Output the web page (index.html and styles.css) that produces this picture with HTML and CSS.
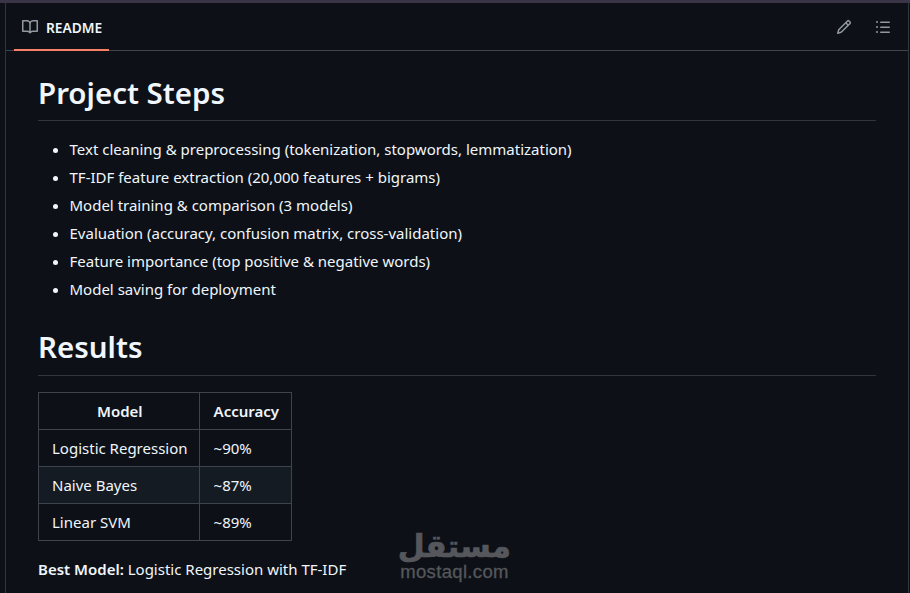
FILE: index.html
```html
<!DOCTYPE html>
<html lang="en">
<head>
<meta charset="utf-8">
<title>README</title>
<link rel="stylesheet" href="styles.css">
</head>
<body>
<div class="topline"></div>
<section class="box">
  <header class="bar">
    <div class="tab">
      <svg class="icon" viewBox="0 0 16 16" width="16" height="16"><path fill="currentColor" d="M0 1.75A.75.75 0 0 1 .75 1h4.253c1.227 0 2.317.59 3 1.501A3.743 3.743 0 0 1 11.006 1h4.245a.75.75 0 0 1 .75.75v10.5a.75.75 0 0 1-.75.75h-4.507a2.25 2.25 0 0 0-1.591.659l-.622.621a.75.75 0 0 1-1.06 0l-.622-.621A2.25 2.25 0 0 0 5.258 13H.75a.75.75 0 0 1-.75-.75Zm7.251 10.324.004-5.073-.002-2.253A2.25 2.25 0 0 0 5.003 2.5H1.5v9h3.757a3.75 3.75 0 0 1 1.994.574ZM8.755 4.75l-.004 7.322a3.752 3.752 0 0 1 1.992-.572H14.5v-9h-3.495a2.25 2.25 0 0 0-2.25 2.25Z"/></svg>
      <span class="tab-label">README</span>
    </div>
    <div class="tools">
      <svg class="icon" viewBox="0 0 16 16" width="16" height="16"><path fill="currentColor" d="M11.013 1.427a1.75 1.75 0 0 1 2.474 0l1.086 1.086a1.75 1.75 0 0 1 0 2.474l-8.61 8.61c-.21.21-.47.364-.756.445l-3.251.93a.75.75 0 0 1-.927-.928l.929-3.25c.081-.286.235-.547.445-.758l8.61-8.61Zm.176 4.823L9.75 4.81l-6.286 6.287a.253.253 0 0 0-.064.108l-.558 1.953 1.953-.558a.253.253 0 0 0 .108-.064Zm1.238-3.763a.25.25 0 0 0-.354 0L10.811 3.75l1.439 1.44 1.263-1.263a.25.25 0 0 0 0-.354Z"/></svg>
      <svg class="icon" viewBox="0 0 16 16" width="16" height="16"><path fill="currentColor" d="M5.75 2.5h8.5a.75.75 0 0 1 0 1.5h-8.5a.75.75 0 0 1 0-1.5Zm0 5h8.5a.75.75 0 0 1 0 1.5h-8.5a.75.75 0 0 1 0-1.5Zm0 5h8.5a.75.75 0 0 1 0 1.5h-8.5a.75.75 0 0 1 0-1.5ZM2 14a1 1 0 1 1 0-2 1 1 0 0 1 0 2Zm1-6a1 1 0 1 1-2 0 1 1 0 0 1 2 0ZM2 4a1 1 0 1 1 0-2 1 1 0 0 1 0 2Z"/></svg>
    </div>
  </header>
  <article class="body">
    <h2 class="title">Project Steps</h2>
    <ul class="steps">
      <li>Text cleaning &amp; preprocessing (tokenization, stopwords, lemmatization)</li>
      <li>TF-IDF feature extraction (20,000 features + bigrams)</li>
      <li>Model training &amp; comparison (3 models)</li>
      <li>Evaluation (accuracy, confusion matrix, cross-validation)</li>
      <li>Feature importance (top positive &amp; negative words)</li>
      <li>Model saving for deployment</li>
    </ul>
    <h2 class="title title-next">Results</h2>
    <table class="results">
      <thead><tr><th>Model</th><th>Accuracy</th></tr></thead>
      <tbody>
        <tr><td>Logistic Regression</td><td>~90%</td></tr>
        <tr class="alt"><td>Naive Bayes</td><td>~87%</td></tr>
        <tr><td>Linear SVM</td><td>~89%</td></tr>
      </tbody>
    </table>
    <p class="best"><strong>Best Model:</strong> Logistic Regression with TF-IDF</p>
  </article>
</section>
<div class="mark"><div class="mark-ar" lang="ar" dir="rtl">مستقل</div><div class="mark-en">mostaql.com</div></div>
</body>
</html>
```
FILE: styles.css
```css
* { box-sizing: border-box; }
html, body { margin: 0; height: 100%; overflow: hidden; }
body {
  background: #0d1117;
  color: #f0f6fc;
  font-family: "Noto Sans", "Open Sans", sans-serif;
  font-size: 15px;
  position: relative;
}
.topline { height: 3px; background: #3b3548; }
.box {
  margin: 0 1px 0 5px;
  border-left: 1px solid #30363d;
  border-right: 1px solid #30363d;
  height: 590px;
  overflow: hidden;
}
.bar {
  height: 48px;
  border-bottom: 1px solid #3d444d;
  display: flex;
  justify-content: space-between;
  align-items: center;
  padding: 0 17px 0 8px;
}
.tab {
  height: 48px;
  width: 95px;
  padding-left: 8px;
  display: flex;
  align-items: center;
  gap: 8px;
  font-size: 13.75px;
  font-weight: 600;
  color: #f0f6fc;
  border-bottom: 2px solid #f78166;
  margin-bottom: -1px;
  padding-top: 1px;
}
.tab-label { position: relative; top: 1px; }
.icon { color: #9198a1; display: block; flex: none; }
.tools { display: flex; gap: 23px; }
.body { padding: 0 32px; }
.title {
  margin: 0;
  font-size: 29.5px;
  font-weight: 600;
  line-height: 40px;
  padding-top: 22px;
  padding-bottom: 7px;
  border-bottom: 1px solid #30363d;
}
.title-next { padding-top: 26px; padding-bottom: 8px; }
.steps { margin: 16px 0 0; padding: 0 0 0 31.5px; line-height: 24px; }
.steps li { margin-top: 4px; }
.steps li:first-child { margin-top: 0; }
.results {
  border-collapse: collapse;
  margin-top: 16px;
  line-height: 24px;
}
.results th, .results td {
  border: 1px solid #3d444d;
  padding: 6px 12px 6px 14px;
  font-weight: 400;
}
.results th:first-child, .results td:first-child { padding: 6px 11px 6px 13px; }
.results th { font-weight: 600; text-align: center; }
.results .alt td { background: #151b23; }
.best { margin: 16px 0 0; line-height: 24px; }
.best strong { font-weight: 600; }
.mark {
  position: absolute;
  left: 398px;
  top: 529px;
  width: 113px;
  color: #55575c;
  text-align: center;
  pointer-events: none;
}
.mark-ar { font-family: "DejaVu Sans", sans-serif; font-weight: 700; font-size: 31px; line-height: 34px; -webkit-text-stroke: .7px #55575c; }
.mark-en { font-family: "Liberation Sans", sans-serif; font-weight: 400; font-size: 18.5px; line-height: 17px; letter-spacing: .35px; -webkit-text-stroke: .3px #55575c; }
```
